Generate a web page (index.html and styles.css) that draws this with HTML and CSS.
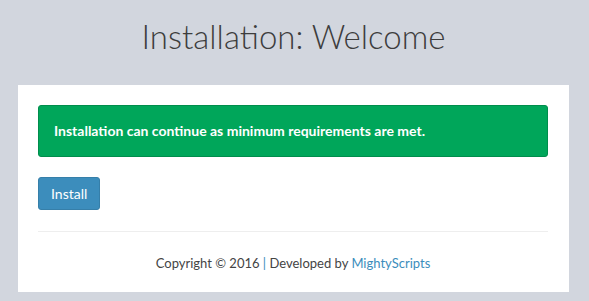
FILE: index.html
```html
<!DOCTYPE html>
<html lang="en">
<head>
    <meta charset="UTF-8">
    <title>Installation: Welcome</title>
    <link rel="stylesheet" href="styles.css">
</head>
<body>
    <div class="install-page">
        <h1 class="install-title">Installation: Welcome</h1>

        <div class="install-box">
            <div class="alert alert-success">Installation can continue as minimum requirements are met.</div>

            <button class="btn btn-primary" type="button">Install</button>

            <hr class="divider">

            <footer class="install-footer">
                Copyright &copy; 2016 <span class="sep">|</span> Developed by <a href="#">MightyScripts</a>
            </footer>
        </div>
    </div>
</body>
</html>
```

FILE: styles.css
```css
body {
    margin: 0;
    background: #d2d6de;
    font-family: Lato, "Noto Sans", sans-serif;
    font-size: 14px;
    color: #333;
}

.install-page {
    padding: 0 20px 9px 18px;
}

.install-title {
    margin: 0;
    padding: 14px 0 0;
    height: 85px;
    box-sizing: border-box;
    text-align: center;
    font-size: 33px;
    font-weight: 300;
    line-height: 44px;
    color: #3d3d3d;
}

.install-box {
    background: #fff;
    padding: 20px 21px 0 20px;
}

.alert {
    padding: 15px 15px;
    border: 1px solid #008d4c;
    border-radius: 3px;
    background: #00a65a;
    color: #fff;
    font-weight: bold;
    line-height: 20px;
}

.btn {
    display: inline-block;
    margin-top: 20px;
    padding: 6px 12px;
    border: 1px solid #367fa9;
    border-radius: 3px;
    background: #3c8dbc;
    color: #fff;
    font-family: inherit;
    font-size: 14px;
    line-height: 19px;
}

.divider {
    margin: 21px 0 0;
    border: 0;
    border-top: 1px solid #eee;
}

.install-footer {
    padding: 21px 0 19px;
    text-align: center;
    color: #444;
    font-size: 13px;
    line-height: 20px;
}

.install-footer .sep {
    color: #3c8dbc;
}

.install-footer a {
    color: #3c8dbc;
    text-decoration: none;
}
```
